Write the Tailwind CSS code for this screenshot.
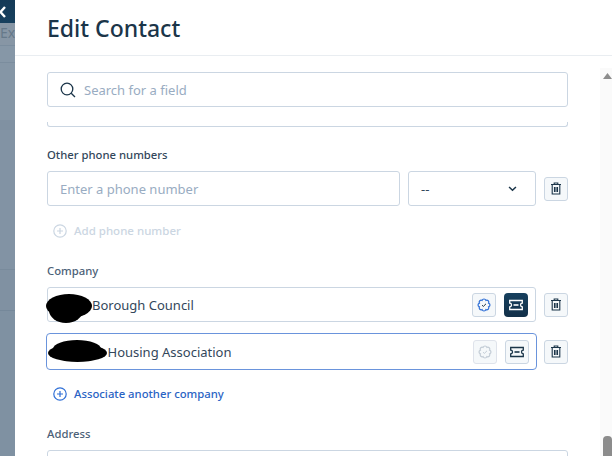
<!DOCTYPE html>
<html><head><meta charset="utf-8"><script src="https://cdn.jsdelivr.net/npm/@tailwindcss/browser@4"></script></head>
<body class="w-[612px] h-[456px] overflow-hidden bg-white font-['Noto_Sans',sans-serif]">
<div class="flex h-[456px]">
  <div class="w-[15px] shrink-0 bg-[#7f91a2] flex flex-col overflow-hidden">
    <div class="h-[23px] shrink-0 bg-linear-to-b from-[#143a57] to-[#17405e] flex items-center">
      <svg class="w-[8px] h-[12px] -ml-[1px]" viewBox="0 0 8 12" fill="none" stroke="#fff" stroke-width="2.4"><path d="M6 1L1.5 6L6 11"/></svg>
    </div>
    <div class="h-[23px] shrink-0 text-[14px] leading-[20px] text-[#66798a] bg-[#8796a5] whitespace-nowrap border-b border-[#7b8d9e]">Exp</div>
    <div class="h-[17px] shrink-0 bg-[#8697a7] border-b border-[#7b8d9e]"></div>
    <div class="h-[57px] shrink-0 bg-[#8596a6]"></div>
    <div class="h-[10px] shrink-0 bg-[#8091a2]"></div>
    <div class="h-[140px] shrink-0 border-b border-[#798b9c] bg-[#8293a4]"></div>
    <div class="h-[41px] shrink-0 border-b border-[#75889a] bg-[#8091a2]"></div>
  </div>
  <div class="flex-1 flex flex-col min-w-0">
    <div class="h-[56px] shrink-0 border-b border-[#e9edf1] pl-[32px] flex items-center">
      <h1 class="text-[23px] leading-[32px] font-medium text-[#1b3549] mt-[1px]">Edit Contact</h1>
    </div>
    <div class="flex-1 flex min-h-0">
      <div class="w-[585px] pl-[32px] pr-[32px] pt-[16px] overflow-hidden">
        <div class="h-[35px] border border-[#cbd6e2] rounded-[3px] flex items-center pl-[12px] gap-[8px]">
          <svg class="w-[16px] h-[16px]" viewBox="0 0 16 16" fill="none" stroke="#1b3549" stroke-width="1.3"><circle cx="7" cy="7" r="5.8"/><path d="M11.2 11.2L15 15"/></svg>
          <span class="text-[13px] text-[#99acc2] mt-[2px]">Search for a field</span>
        </div>
        <div class="h-[5px] mt-[15px] border-x border-b border-[#cbd6e2] rounded-b-[3px]"></div>

        <div class="mt-[19px] text-[11.3px] leading-[18px] font-medium text-[#33475b]">Other phone numbers</div>
        <div class="mt-[7px] flex items-center">
          <div class="w-[353px] h-[35px] border border-[#cbd6e2] rounded-[3px] flex items-center pl-[12px] text-[13px] text-[#99acc2]"><span class="mt-[2px]">Enter a phone number</span></div>
          <div class="ml-[8px] w-[128px] h-[35px] border border-[#cbd6e2] rounded-[3px] flex items-center justify-between pl-[12px] pr-[18px] text-[13px] text-[#33475b]">
            <span class="mt-[2px]">--</span>
            <svg class="w-[9px] h-[6px]" viewBox="0 0 10 7" fill="none" stroke="#1b3549" stroke-width="1.8"><path d="M1 1.2L5 5L9 1.2"/></svg>
          </div>
          <div class="ml-[8px] w-[24px] h-[24px] border border-[#cbd6e2] rounded-[3px] bg-[#f5f8fa] flex items-center justify-center">
            <svg class="w-[12px] h-[13px]" viewBox="0 0 12 13" fill="none" stroke="#1b3549" stroke-width="1.1"><path d="M1 2.5H11M4.2 2.3V1H7.8V2.3M2.2 2.7V12H9.8V2.7M4.5 5V10M6 5V10M7.5 5V10"/></svg>
          </div>
        </div>
        <div class="mt-[15px] flex items-center pl-[6px] gap-[7px] h-[20px]">
          <svg class="w-[14px] h-[14px]" viewBox="0 0 14 14" fill="none" stroke="#cbd6e2" stroke-width="1.2"><circle cx="7" cy="7" r="6.2"/><path d="M7 4V10M4 7H10"/></svg>
          <span class="text-[11.5px] font-medium text-[#cbd6e2]">Add phone number</span>
        </div>

        <div class="mt-[21px] text-[11.3px] leading-[18px] font-medium text-[#4c6177]">Company</div>
        <div class="mt-[7px] flex items-center">
          <div class="w-[489px] h-[35px] border border-[#cbd6e2] rounded-[3px] flex items-center justify-between pr-[7px] relative">
            <span class="pl-[44px] text-[13px] text-[#33475b] mt-[2px]">Borough Council</span>
            <svg class="absolute -left-[2px] top-[5px] w-[46px] h-[30px]" viewBox="0 0 46 30" fill="#000"><ellipse cx="23" cy="13" rx="23" ry="12"/><ellipse cx="20" cy="17" rx="17" ry="13"/></svg>
            <div class="flex gap-[8px]">
              <div class="w-[24px] h-[24px] border border-[#cbd6e2] rounded-[3px] bg-[#f5f8fa] flex items-center justify-center">
                <svg class="w-[14px] h-[14px]" viewBox="0 0 14 14" fill="none" stroke="#2f6fd6" stroke-width="1.2"><path d="M8.9 2.4A2 2 0 0 1 11.6 5.1A2 2 0 0 1 11.6 8.9A2 2 0 0 1 8.9 11.6A2 2 0 0 1 5.1 11.6A2 2 0 0 1 2.4 8.9A2 2 0 0 1 2.4 5.1A2 2 0 0 1 5.1 2.4A2 2 0 0 1 8.9 2.4Z"/><path d="M5 7.2L6.4 8.4L9 5.8" stroke="#1b3549" stroke-width="1"/></svg>
              </div>
              <div class="w-[24px] h-[24px] rounded-[4px] bg-linear-to-b from-[#17405e] to-[#123049] flex items-center justify-center">
                <svg class="w-[14px] h-[12px]" viewBox="0 0 14 12" fill="none" stroke="#fff" stroke-width="1.3"><path d="M.7 1.5H13.3V4.2A1.8 1.8 0 0 0 13.3 7.8V10.5H.7V7.8A1.8 1.8 0 0 0 .7 4.2Z"/><path d="M4.5 6H9.5" stroke-width="1.6"/></svg>
              </div>
            </div>
          </div>
          <div class="ml-[8px] w-[24px] h-[24px] border border-[#cbd6e2] rounded-[3px] bg-[#f5f8fa] flex items-center justify-center">
            <svg class="w-[12px] h-[13px]" viewBox="0 0 12 13" fill="none" stroke="#1b3549" stroke-width="1.1"><path d="M1 2.5H11M4.2 2.3V1H7.8V2.3M2.2 2.7V12H9.8V2.7M4.5 5V10M6 5V10M7.5 5V10"/></svg>
          </div>
        </div>
        <div class="mt-[11px] flex items-center -ml-[1px]">
          <div class="w-[491px] h-[37px] border-[1.5px] border-[#6a94dc] rounded-[4px] flex items-center justify-between pr-[7.5px] relative">
            <span class="pl-[60.5px] text-[13px] text-[#33475b] mt-[2px]">Housing Association</span>
            <svg class="absolute left-[1px] top-[6px] w-[59px] h-[22px]" viewBox="0 0 59 22" fill="#000"><ellipse cx="29" cy="9" rx="24" ry="9"/><ellipse cx="29.5" cy="13" rx="29.5" ry="9"/></svg>
            <div class="flex gap-[8px]">
              <div class="w-[24px] h-[24px] border border-[#dfe3eb] rounded-[3px] bg-[#f5f8fa] flex items-center justify-center">
                <svg class="w-[14px] h-[14px]" viewBox="0 0 14 14" fill="none" stroke="#c3ccd6" stroke-width="1.2"><path d="M8.9 2.4A2 2 0 0 1 11.6 5.1A2 2 0 0 1 11.6 8.9A2 2 0 0 1 8.9 11.6A2 2 0 0 1 5.1 11.6A2 2 0 0 1 2.4 8.9A2 2 0 0 1 2.4 5.1A2 2 0 0 1 5.1 2.4A2 2 0 0 1 8.9 2.4Z"/><path d="M5 7.2L6.4 8.4L9 5.8" stroke-width="1"/></svg>
              </div>
              <div class="w-[24px] h-[24px] border border-[#cbd6e2] rounded-[3px] bg-[#f5f8fa] flex items-center justify-center">
                <svg class="w-[14px] h-[12px]" viewBox="0 0 14 12" fill="none" stroke="#1b3549" stroke-width="1.3"><path d="M.7 1.5H13.3V4.2A1.8 1.8 0 0 0 13.3 7.8V10.5H.7V7.8A1.8 1.8 0 0 0 .7 4.2Z"/><path d="M4.5 6H9.5" stroke-width="1.6"/></svg>
              </div>
            </div>
          </div>
          <div class="ml-[7px] w-[24px] h-[24px] border border-[#cbd6e2] rounded-[3px] bg-[#f5f8fa] flex items-center justify-center">
            <svg class="w-[12px] h-[13px]" viewBox="0 0 12 13" fill="none" stroke="#1b3549" stroke-width="1.1"><path d="M1 2.5H11M4.2 2.3V1H7.8V2.3M2.2 2.7V12H9.8V2.7M4.5 5V10M6 5V10M7.5 5V10"/></svg>
          </div>
        </div>
        <div class="mt-[14px] flex items-center pl-[6px] gap-[7px] h-[20px]">
          <svg class="w-[14px] h-[14px]" viewBox="0 0 14 14" fill="none" stroke="#2f6fd6" stroke-width="1.2"><circle cx="7" cy="7" r="6.2"/><path d="M7 4V10M4 7H10"/></svg>
          <span class="text-[11.3px] font-medium text-[#2a63c4]">Associate another company</span>
        </div>
        <div class="mt-[21px] text-[11.3px] leading-[18px] font-medium text-[#4c6177]">Address</div>
        <div class="mt-[7px] h-[35px] border border-[#cbd6e2] rounded-[3px]"></div>
      </div>
      <div class="w-[12px] shrink-0 flex flex-col items-end">
        <div class="h-[12px] w-full bg-white"></div>
        <div class="flex-1 w-full bg-[#fafafa] flex flex-col justify-between items-end">
          <div class="pt-[5px]"><svg class="w-[9px] h-[6px] block" viewBox="0 0 9 6" fill="#8c8c8c"><path d="M4.5 0L9 6H0Z"/></svg></div>
          <div class="w-[9px] h-[20px] rounded-t-[4px] bg-[#8c8c8c]"></div>
        </div>
      </div>
    </div>
  </div>
</div>
</body></html>
